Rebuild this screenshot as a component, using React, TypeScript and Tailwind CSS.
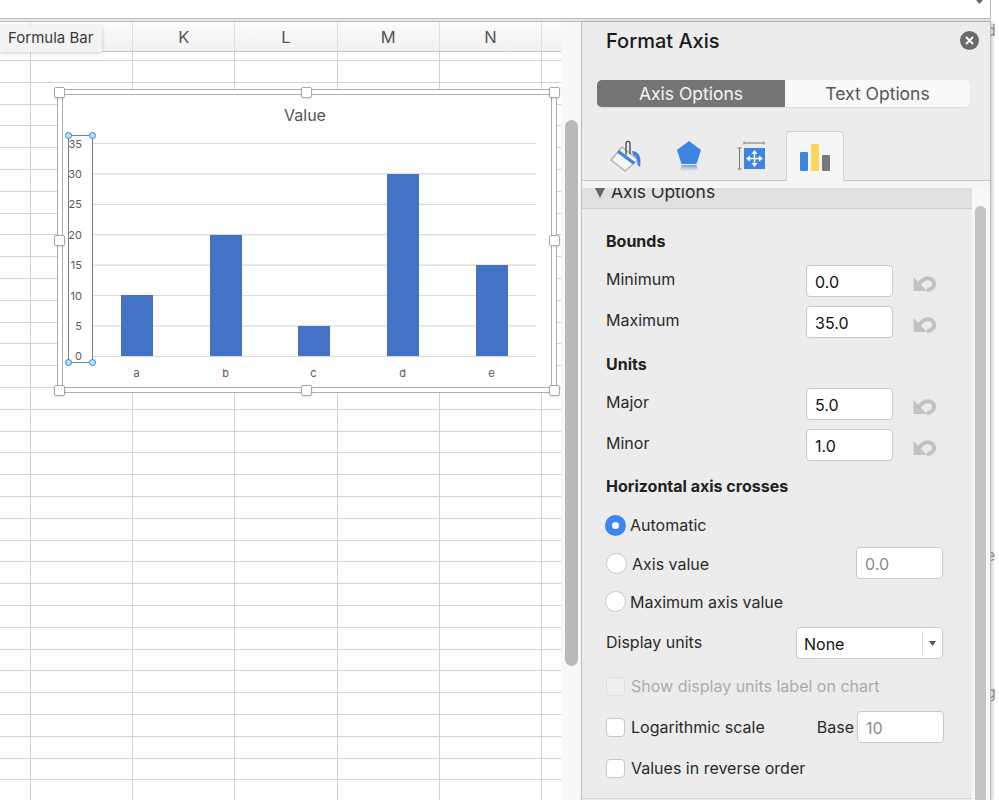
const columns = ['', '', 'K', 'L', 'M', 'N', '']
const colWidths = ['w-[31px]', 'w-[102.2px]', 'w-[102.2px]', 'w-[102.2px]', 'w-[102.2px]', 'w-[102.2px]', 'w-[30px]']
const rowCount = 34

function Undo() {
  return (
    <svg width="24" height="19" viewBox="0 0 24 19" className="ml-[20px] mt-[2px]">
      <path d="M0.5 4 L0.5 18 L14 18 Z" fill="#c2c2c2" />
      <path d="M6 11 C9 6 14 4 18 6 C22 8 22 13 19 15 C18 16 16 17 14 17" fill="none" stroke="#c2c2c2" strokeWidth="4" />
    </svg>
  )
}

function Field({ value, muted, className }: { value: string; muted?: boolean; className?: string }) {
  return (
    <div
      className={`h-[32px] w-[87px] rounded-[4px] border border-[#c8c8c8] bg-white pl-[8px] pt-[3px] text-[16px] leading-[26px] ${
        muted ? 'text-[#8a8a8a]' : 'text-[#111]'
      } ${className ?? ''}`}
    >
      {value}
    </div>
  )
}

function Row({ label, value }: { label: string; value: string }) {
  return (
    <div className="flex h-[32px] items-center">
      <div className="mb-[4px] w-[200px] text-[16px] text-[#2a2a2a]">{label}</div>
      <Field value={value} />
      <Undo />
    </div>
  )
}

function Check({ label, disabled }: { label: string; disabled?: boolean }) {
  return (
    <div className="flex items-center gap-[6px]">
      <div
        className={`h-[19px] w-[19px] rounded-[4px] border ${
          disabled ? 'border-[#dedede] bg-[#efefef]' : 'border-[#c8c8c8] bg-white'
        }`}
      />
      <span className={`text-[16px] ${disabled ? 'text-[#ababab]' : 'text-[#2a2a2a]'}`}>{label}</span>
    </div>
  )
}

function Radio({ on }: { on?: boolean }) {
  return on ? (
    <div className="flex h-[21px] w-[21px] items-center justify-center rounded-full bg-[#3b86f7]">
      <div className="h-[7px] w-[7px] rounded-full bg-white" />
    </div>
  ) : (
    <div className="h-[21px] w-[21px] rounded-full border border-[#c8c8c8] bg-white" />
  )
}

function Handle({ className }: { className: string }) {
  return <div className={`absolute h-[11px] w-[11px] rounded-[2px] border border-[#a8a8a8] bg-white shadow-sm ${className}`} />
}

function Dot({ className }: { className: string }) {
  return <div className={`absolute h-[7px] w-[7px] rounded-full border-[1.5px] border-[#1b87e6] bg-[#bfe0fb] ${className}`} />
}

function Chart() {
  const ticks = [35, 30, 25, 20, 15, 10, 5, 0]
  const bars = [
    { x: 121, top: 295, label: 'a' },
    { x: 210, top: 235, label: 'b' },
    { x: 298, top: 326, label: 'c' },
    { x: 387, top: 174, label: 'd' },
    { x: 476, top: 265, label: 'e' },
  ]
  return (
    <svg width="561" height="778" viewBox="0 22 561 778" className="absolute left-0 top-0">
      <text x="305" y="121" textAnchor="middle" className="fill-[#555] text-[16px]">Value</text>
      {ticks.map((t, i) => {
        const y = 143.5 + i * 30.4
        return (
          <g key={t}>
            <line x1="93" x2="536" y1={y} y2={y} stroke="#dadada" strokeWidth="1.2" />
            <text x="82" y={y + 4} textAnchor="end" className="fill-[#595959] text-[11px]">{t}</text>
          </g>
        )
      })}
      {bars.map(b => (
        <g key={b.label}>
          <rect x={b.x} y={b.top} width="32" height={356 - b.top} fill="#4472c4" />
          <text x={b.x + 15.5} y="377" textAnchor="middle" className="fill-[#595959] text-[11px]">{b.label}</text>
        </g>
      ))}
    </svg>
  )
}

function Sheet() {
  return (
    <div className="relative h-full w-[561px] shrink-0 overflow-hidden bg-white">
      <div className="flex h-[30px] border-b border-[#c6c6c6] bg-gradient-to-b from-[#fbfbfb] to-[#f1f1f1]">
        {columns.map((c, i) => (
          <div
            key={i}
            className={`${colWidths[i]} flex shrink-0 items-center justify-center border-r border-[#e0e0e0] pt-[2px] text-[16.5px] text-[#555]`}
          >
            {c}
          </div>
        ))}
      </div>
      <div className="flex h-[9px]">
        {colWidths.map((w, i) => (
          <div key={i} className={`${w} shrink-0 border-r border-b border-[#d0d0d0]`} />
        ))}
      </div>
      {Array.from({ length: rowCount }).map((_, r) => (
        <div key={r} className="flex h-[21.8px]">
          {colWidths.map((w, i) => (
            <div key={i} className={`${w} shrink-0 border-r border-b border-[#d0d0d0]`} />
          ))}
        </div>
      ))}

      {/* Formula bar tooltip */}
      <div className="absolute left-0 top-[4px] flex h-[26px] w-[102px] items-center bg-[#f3f3f3] pb-[1px] pl-[8px] text-[15px] text-[#3a3a3a] shadow-[0_1px_4px_rgba(0,0,0,0.2)]">
        Formula Bar
      </div>

      {/* Chart with selection frame */}
      <div className="absolute left-[57px] top-[67px] h-[304px] w-[500px] border border-[#adadad] bg-white p-[4px]">
        <div className="h-full w-full border border-[#adadad]" />
      </div>
      <Chart />
      <Handle className="left-[54px] top-[65px]" />
      <Handle className="left-[301px] top-[65px]" />
      <Handle className="left-[549px] top-[65px]" />
      <Handle className="left-[54px] top-[213px]" />
      <Handle className="left-[549px] top-[213px]" />
      <Handle className="left-[54px] top-[363px]" />
      <Handle className="left-[301px] top-[363px]" />
      <Handle className="left-[549px] top-[363px]" />

      {/* Selected axis */}
      <div className="absolute left-[68px] top-[113px] h-[228px] w-[25px] border border-[#808080]" />
      <Dot className="left-[65px] top-[110px]" />
      <Dot className="left-[89px] top-[110px]" />
      <Dot className="left-[65px] top-[337px]" />
      <Dot className="left-[89px] top-[337px]" />
    </div>
  )
}

function BucketIcon() {
  return (
    <svg width="34" height="32" viewBox="0 0 34 32">
      <path d="M2 20 L13 7 L29 20 L16 31 Z" fill="#f6f6f6" stroke="#b0b0b0" strokeWidth="1.4" strokeLinejoin="round" />
      <path d="M8 12.5 L10 10 L26 22 L24 24.5 Z" fill="#3d85e0" />
      <path d="M17 15 L17 4 C17 0.5 21 0.5 21 4 L21 14" fill="none" stroke="#444" strokeWidth="1.3" />
      <path d="M23 11 C29 11 33 16 31 27 L28.5 25 C29 20 27 16 24 15 Z" fill="#3d85e0" />
    </svg>
  )
}

function PentagonIcon() {
  return (
    <svg width="26" height="32" viewBox="0 0 26 32">
      <defs>
        <linearGradient id="fade" x1="0" y1="0" x2="0" y2="1">
          <stop offset="0" stopColor="#3d85e0" stopOpacity="0.7" />
          <stop offset="1" stopColor="#3d85e0" stopOpacity="0" />
        </linearGradient>
      </defs>
      <path d="M13 1 L25 10 L20.5 24 L5.5 24 L1 10 Z" fill="#3d85e0" />
      <path d="M5.5 25 L20.5 25 L22 31 L4 31 Z" fill="url(#fade)" />
    </svg>
  )
}

function SizeIcon() {
  return (
    <svg width="29" height="29" viewBox="0 0 29 29" className="-ml-[2px]">
      <path d="M7 2 H27 M7 0.5 V3.5 M27 0.5 V3.5" stroke="#777" strokeWidth="1" />
      <path d="M2.5 7 V28 M0.5 7 H4.5 M0.5 28 H4.5" stroke="#777" strokeWidth="1" />
      <rect x="7" y="7" width="21" height="21" fill="#3d85e0" />
      <path d="M17.5 12 V23 M12 17.5 H23" stroke="#fff" strokeWidth="1.4" />
      <path d="M17.5 9 L14.5 13 H20.5 Z M17.5 26 L14.5 22 H20.5 Z M9 17.5 L13 14.5 V20.5 Z M26 17.5 L22 14.5 V20.5 Z" fill="#fff" />
    </svg>
  )
}

function BarsIcon() {
  return (
    <svg width="32" height="28" viewBox="0 0 32 28">
      <rect x="1" y="9" width="8" height="19" rx="1" fill="#3d85e0" />
      <rect x="12" y="1" width="8" height="27" rx="1" fill="#fdd45c" />
      <rect x="23" y="12" width="8" height="16" rx="1" fill="#787878" />
    </svg>
  )
}

function Panel() {
  return (
    <div className="relative z-10 flex h-full w-[410px] shrink-0 flex-col border-x border-[#bcbcbc] bg-[#ececec] shadow-[2px_0_3px_rgba(0,0,0,0.18)]">
      <div className="flex items-center justify-between pl-[24px] pr-[11px] pt-[7px]">
        <div className="text-[20px] font-medium leading-[24px] text-[#1a1a1a]">Format Axis</div>
        <div className="mb-[2px] flex h-[19px] w-[19px] items-center justify-center rounded-full bg-[#6b6b6b]">
          <svg width="9" height="9" viewBox="0 0 9 9">
            <path d="M1 1 L8 8 M8 1 L1 8" stroke="#fff" strokeWidth="1.8" />
          </svg>
        </div>
      </div>

      <div className="ml-[15px] mt-[27px] flex h-[28px] w-[373px] overflow-hidden rounded-[5px] border-b border-[#dcdcdc] text-[17.5px]">
        <div className="flex w-[188px] items-center justify-center bg-[#757575] pt-[2px] text-[#f5f5f5]">Axis Options</div>
        <div className="flex flex-1 items-center justify-center bg-[#f9f9f9] pt-[2px] text-[#555]">Text Options</div>
      </div>

      <div className="mt-[23px] flex h-[50px] gap-[5px] border-b border-[#c8c8c8] pl-[15px]">
        <div className="flex w-[58px] items-center justify-center"><BucketIcon /></div>
        <div className="flex w-[58px] items-center justify-center"><PentagonIcon /></div>
        <div className="flex w-[58px] items-center justify-center"><SizeIcon /></div>
        <div className="-mb-px flex w-[58px] items-center justify-center rounded-t-[4px] border-x border-t border-[#d2d2d2] bg-[#f5f5f5]"><BarsIcon /></div>
      </div>

      <div className="h-[7px] bg-[#f5f5f5]" />

      <div className="flex min-h-0 flex-1">
        <div className="w-[390px] shrink-0">
          <div className="flex h-[21px] overflow-hidden border-b border-[#d0d0d0] bg-[#e1e1e1] pl-[12px]">
            <svg width="12" height="10" viewBox="0 0 12 10" className="shrink-0">
              <path d="M1 0 H11 L6 10 Z" fill="#666" />
            </svg>
            <div className="-mt-[7px] ml-[5px] text-[17.5px] leading-[22px] text-[#2a2a2a]">Axis Options</div>
          </div>

          <div className="pl-[24px]">
            <div className="mt-[21px] h-[22px] text-[16px] font-bold leading-[22px] text-[#222]">Bounds</div>
            <div className="mt-[13px] flex flex-col gap-[9px]">
              <Row label="Minimum" value="0.0" />
              <Row label="Maximum" value="35.0" />
            </div>
            <div className="mt-[15px] h-[22px] text-[16px] font-bold leading-[22px] text-[#222]">Units</div>
            <div className="mt-[13px] flex flex-col gap-[9px]">
              <Row label="Major" value="5.0" />
              <Row label="Minor" value="1.0" />
            </div>
            <div className="mt-[14px] h-[22px] text-[16px] font-bold leading-[22px] text-[#222]">Horizontal axis crosses</div>

            <div className="mt-[12px] flex flex-col gap-[6px] text-[16px] text-[#2a2a2a]">
              <div className="-ml-[1px] flex h-[32px] items-center gap-[4px]">
                <Radio on />
                <span>Automatic</span>
              </div>
              <div className="flex h-[32px] items-center">
                <Radio />
                <span className="ml-[5px] pt-[1px]">Axis value</span>
                <Field value="0.0" muted className="ml-auto mr-[29px]" />
              </div>
              <div className="-ml-[1px] flex h-[32px] items-center gap-[4px]">
                <Radio />
                <span className="pt-[1px]">Maximum axis value</span>
              </div>
            </div>

            <div className="mt-[10px] flex h-[32px] items-center text-[16px] text-[#2a2a2a]">
              <span className="mb-[2px] w-[190px]">Display units</span>
              <div className="flex h-full w-[147px] items-center rounded-[4px] border border-[#c8c8c8] bg-white">
                <span className="flex-1 pl-[7px] pt-[1px] text-[#111]">None</span>
                <div className="flex h-[24px] w-[20px] items-center justify-center border-l border-[#dedede]">
                  <svg width="7" height="5" viewBox="0 0 7 5">
                    <path d="M0 0 H7 L3.5 5 Z" fill="#555" />
                  </svg>
                </div>
              </div>
            </div>

            <div className="mt-[11px] flex h-[32px] items-center">
              <Check label="Show display units label on chart" disabled />
            </div>
            <div className="mt-[9px] flex h-[32px] items-center">
              <Check label="Logarithmic scale" />
              <span className="ml-auto text-[16px] text-[#2a2a2a]">Base</span>
              <Field value="10" muted className="ml-[3px] mr-[28px]" />
            </div>
            <div className="mt-[9px] flex h-[32px] items-center">
              <Check label="Values in reverse order" />
            </div>
          </div>
          <div className="mt-[14px] border-t border-[#d4d4d4]" />
        </div>

        <div className="flex-1 bg-[#f7f7f7] px-[3px] pt-[18px]">
          <div className="h-full w-[11px] rounded-t-full bg-[#c4c4c4]" />
        </div>
      </div>
    </div>
  )
}

export default function App() {
  return (
    <div className="flex h-[800px] w-[999px] overflow-hidden bg-white font-['Inter',sans-serif]">
      <div className="flex h-full w-[991px] shrink-0 flex-col">
        <div className="flex h-[18px] shrink-0 justify-end border-r border-[#bcbcbc] bg-white pr-[7px]">
          <svg width="7" height="4" viewBox="0 0 7 4">
            <path d="M0 0 H7 L3.5 4 Z" fill="#666" />
          </svg>
        </div>
        <div className="h-[4px] shrink-0 border-y border-[#bcbcbc] bg-[#e8e8e8]" />
        <div className="flex min-h-0 flex-1">
          <Sheet />
          <div className="h-full w-[20px] shrink-0 bg-[#f8f8f8] px-[4px] pt-[98px]">
            <div className="h-[546px] w-[13px] rounded-full bg-[#b9b9b9]" />
          </div>
          <Panel />
        </div>
      </div>
      <div className="relative flex-1 overflow-hidden bg-white text-[16px] text-[#999]">
        <span className="absolute -left-[5px] top-[18px]">d</span>
        <span className="absolute -left-[5px] top-[543px]">e</span>
        <span className="absolute -left-[5px] top-[680px]">g</span>
      </div>
    </div>
  )
}
